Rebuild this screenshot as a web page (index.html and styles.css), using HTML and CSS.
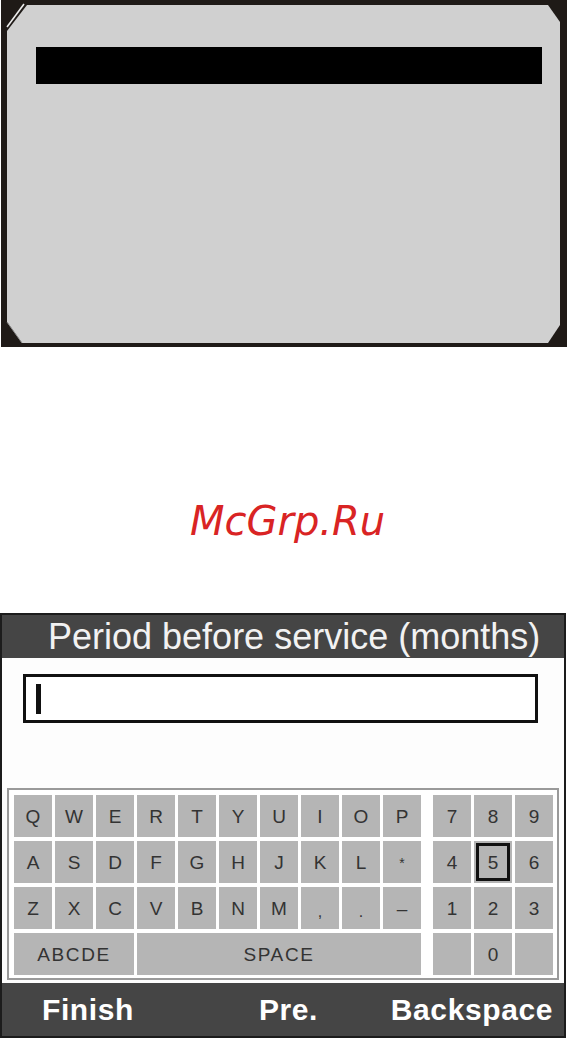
FILE: index.html
```html
<!DOCTYPE html>
<html lang="en">
<head>
<meta charset="utf-8">
<title>Service period</title>
<link rel="stylesheet" href="styles.css">
</head>
<body>
<div class="lcd-frame">
  <div class="lcd">
    <div class="lcd-bar"></div>
  </div>
  <svg class="lcd-deco" width="566" height="347" viewBox="0 0 566 347">
    <line x1="23" y1="4" x2="6" y2="27" stroke="#ececec" stroke-width="1.6"/>
    <line x1="6" y1="322" x2="21" y2="343" stroke="#8a8a8a" stroke-width="1"/>
  </svg>
</div>

<div class="watermark">McGrp.Ru</div>

<div class="device">
  <div class="header">Period before service (months)</div>
  <div class="content">
    <div class="input-box"><span class="cursor"></span></div>
    <div class="kbd-frame">
      <div class="letters">
        <div class="key">Q</div><div class="key">W</div><div class="key">E</div><div class="key">R</div><div class="key">T</div><div class="key">Y</div><div class="key">U</div><div class="key">I</div><div class="key">O</div><div class="key">P</div>
        <div class="key">A</div><div class="key">S</div><div class="key">D</div><div class="key">F</div><div class="key">G</div><div class="key">H</div><div class="key">J</div><div class="key">K</div><div class="key">L</div><div class="key key-small">*</div>
        <div class="key">Z</div><div class="key">X</div><div class="key">C</div><div class="key">V</div><div class="key">B</div><div class="key">N</div><div class="key">M</div><div class="key key-low">,</div><div class="key key-low">.</div><div class="key">–</div>
        <div class="key key-wide3 key-word">ABCDE</div><div class="key key-wide7 key-word">SPACE</div>
      </div>
      <div class="numbers">
        <div class="key">7</div><div class="key">8</div><div class="key">9</div>
        <div class="key">4</div><div class="key key-selected">5</div><div class="key">6</div>
        <div class="key">1</div><div class="key">2</div><div class="key">3</div>
        <div class="key"></div><div class="key">0</div><div class="key"></div>
      </div>
    </div>
  </div>
  <div class="footer">
    <span class="soft soft-finish">Finish</span>
    <span class="soft soft-pre">Pre.</span>
    <span class="soft soft-back">Backspace</span>
  </div>
</div>
</body>
</html>
```

FILE: styles.css
```css
html, body {
  margin: 0;
  padding: 0;
  background: #ffffff;
}

body {
  width: 568px;
  height: 1038px;
  overflow: hidden;
  font-family: "Liberation Sans", Arial, sans-serif;
}

/* ---------- top LCD ---------- */
.lcd-frame {
  position: relative;
  box-sizing: border-box;
  width: 566px;
  height: 347px;
  margin-left: 1px;
  padding: 5px 7px 4px 6px;
  background: #1f1a17;
}

.lcd {
  height: 338px;
  background: #d0d0d0;
  padding-top: 42px;
  box-sizing: border-box;
  clip-path: polygon(20px 0, calc(100% - 12px) 0, 100% 17px, 100% calc(100% - 18px), calc(100% - 12px) 100%, 15px 100%, 0 calc(100% - 21px), 0 26px);
}

.lcd-bar {
  height: 37px;
  margin-left: 29px;
  margin-right: 18px;
  background: #000000;
}

.lcd-deco {
  position: absolute;
  left: 0;
  top: 0;
  pointer-events: none;
}

/* ---------- watermark ---------- */
.watermark {
  box-sizing: border-box;
  height: 266px;
  padding-top: 151px;
  padding-left: 190px;
  font-family: "DejaVu Sans", sans-serif;
  font-style: oblique;
  font-size: 40px;
  line-height: 47px;
  color: #d92424;
}

/* ---------- device screen ---------- */
.device {
  box-sizing: border-box;
  width: 566px;
  height: 425px;
  border: 2px solid #1c1c1c;
  display: flex;
  flex-direction: column;
  background: #fdfdfd;
}

.header {
  height: 43px;
  flex: none;
  background: #454545;
  color: #f2f2f2;
  font-size: 36px;
  line-height: 43px;
  padding-left: 46px;
  white-space: nowrap;
}

.content {
  flex: 1;
  padding-top: 16px;
}

.input-box {
  box-sizing: border-box;
  width: 515px;
  height: 49px;
  margin-left: 21px;
  border: 3px solid #111111;
  display: flex;
  align-items: center;
  padding-left: 10px;
  background: #ffffff;
}

.cursor {
  display: block;
  width: 5px;
  height: 30px;
  background: #111111;
}

.kbd-frame {
  box-sizing: border-box;
  width: 552px;
  margin-left: 5px;
  margin-top: 65px;
  border: 2px solid #9a9a9a;
  padding: 5px 4px 3px 5px;
  display: flex;
  gap: 12px;
  background: #ffffff;
}

.letters {
  display: grid;
  grid-template-columns: repeat(10, 38px);
  grid-auto-rows: 42px;
  gap: 4px 3px;
}

.numbers {
  display: grid;
  grid-template-columns: repeat(3, 38px);
  grid-auto-rows: 42px;
  gap: 4px 3px;
}

.key {
  background: #b5b5b5;
  color: #333333;
  font-size: 19px;
  display: flex;
  align-items: center;
  justify-content: center;
  padding-top: 2px;
  box-sizing: border-box;
}

.key-small {
  font-size: 14px;
}

.key-low {
  padding-top: 8px;
  font-size: 16px;
}

.key-wide3 {
  grid-column: span 3;
}

.key-wide7 {
  grid-column: span 7;
}

.key-word {
  letter-spacing: 1.6px;
  font-size: 19px;
}

.key-selected {
  outline: 3px solid #111111;
  outline-offset: -5px;
}

.footer {
  flex: none;
  height: 53px;
  margin-top: 3px;
  background: #454545;
  color: #ffffff;
  font-weight: bold;
  font-size: 30px;
  line-height: 53px;
  display: flex;
  padding-left: 40px;
  padding-right: 11px;
  letter-spacing: 0.6px;
}

.soft-pre {
  margin-left: 125px;
}

.soft-back {
  margin-left: auto;
}
```
